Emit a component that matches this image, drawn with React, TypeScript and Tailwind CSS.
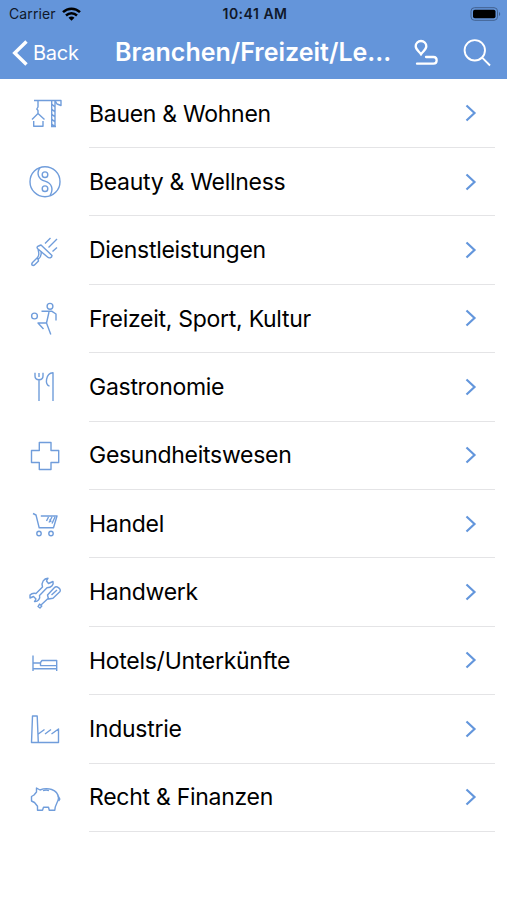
import type { ReactNode } from 'react';

type Category = {
  label: string;
  icon: ReactNode;
};

const categories: Category[] = [
  {
    label: 'Bauen & Wohnen',
    icon: (
      <>
        <path d="M14 16.5H41V21.5L37 20L35 16.5M31.7 16.5V42.5M35 16.5V42.5M31.7 20L35 23M31.7 25L35 28M31.7 30L35 33M31.7 35L35 38M31.7 40L35 42.5M31 42.5H36" />
        <path d="M18 16.5V23L16.8 25L18 26.5V29.5L12 35.5M18 29.5L24.5 35.5M13.7 37V42.3H23V37" />
      </>
    ),
  },
  {
    label: 'Beauty & Wellness',
    icon: (
      <>
        <circle cx="25" cy="29.7" r="15" />
        <path d="M20 15.7C16 21.7 18.5 27.2 25 29.2C32.5 31.5 33.5 37.7 30 43.7" />
        <circle cx="25" cy="22.7" r="2.8" />
        <circle cx="25" cy="36.7" r="2.8" />
      </>
    ),
  },
  {
    label: 'Dienstleistungen',
    icon: (
      <>
        <path d="M18.5 25L21 24L32 34.5C32 37 29 37.5 27.5 36L18 28C16.5 26.5 17 25.5 18.5 25ZM18 28C18.5 31 20 34 17.5 36.5M21 30C21.5 33 21 36 18.5 38M17.5 36.5L12.5 41.5C10.5 44 13 45.5 15 43.5L18.5 40Z" />
        <path d="M25 22.5L30.5 17M28.5 26.5L37 18M32.5 30.5L37 26.5" />
      </>
    ),
  },
  {
    label: 'Freizeit, Sport, Kultur',
    icon: (
      <>
        <circle cx="30" cy="17.3" r="2.9" />
        <circle cx="14.5" cy="27" r="2.9" />
        <path d="M21.5 22.3H32L36 25V31.5M29 23L26.5 34L30.8 45.5M26.5 34H18L23.5 40" />
      </>
    ),
  },
  {
    label: 'Gastronomie',
    icon: (
      <>
        <path d="M15 15.7V19C15 24 23 24 23 19V15.7M19 16V20M19 23V44" />
        <path d="M33 44V15.7C25.5 16 24.5 28.5 29.5 29" />
      </>
    ),
  },
  {
    label: 'Gesundheitswesen',
    icon: (
      <path d="M19.3 16.5H31V24.5H38.7V36.5H31V43.5H19.3V36.5H11.5V24.5H19.3Z" />
    ),
  },
  {
    label: 'Handel',
    icon: (
      <>
        <path d="M13 19.5L16 21L19.2 33.8H33.5L37 22H20.8M26.5 27L28.5 23M29 28.5L32 23M32 29.5L35 23M30 25L31 28" />
        <circle cx="19" cy="39.5" r="2.2" />
        <circle cx="31" cy="39.5" r="2.2" />
      </>
    ),
  },
  {
    label: 'Handwerk',
    icon: (
      <>
        <path d="M10 32C12 30 14 30 16 30.5L22.5 24C21 19 24 15.5 28 15.2L26.5 18L28.5 20.5L33 18.5C34 21.5 31.5 24.5 27 24.7L19.5 32.5C20.5 35.5 18 38.8 14.5 38.5L16 36L13.5 33.5L10 35Z" />
        <path d="M27.5 32L34.5 24.5C36.5 22.5 42 26 39.8 28.8L33 35.3L28.5 36ZM28 35.5L21 42M19.5 41L21.8 43L20 45L18 43.5ZM31.5 32L37 27" />
      </>
    ),
  },
  {
    label: 'Hotels/Unterkünfte',
    icon: (
      <path d="M13 24.5V40M13 37.8H36.7M36.7 40V29.5H22L20.5 31.5V34.6H36.7M13 32H20.5" />
    ),
  },
  {
    label: 'Industrie',
    icon: (
      <path d="M11.5 43.5L12.5 17H17.2L18.3 43.5ZM18.3 35L24.5 30.5M25 35L31 30.5M31.5 35L38.5 30V43.5H18.3" />
    ),
  },
  {
    label: 'Recht & Finanzen',
    icon: (
      <>
        <path d="M16.5 20L20 22C27 19 38 21 38.5 30C38.5 34 35 36 34.8 42.3H29.3L28.5 39.3H23.5L22.5 42.3H17.5V38.3L14.5 34.5L11.5 33V28.5L14 27L16.5 24Z" />
        <path d="M23 22.7C25 21.7 27 21.7 29 22.5M38.2 28L39.8 31L38.5 33" />
      </>
    ),
  },
];

function StatusBar() {
  return (
    <div className="grid h-[27px] grid-cols-3 items-center pr-[6px] pl-[9px] text-[14px] text-[#10182a]">
      <div className="flex items-center gap-[6px]">
        <span className="tracking-[0.1px]">Carrier</span>
        <svg className="h-[14px] w-[19px]" viewBox="0 0 19 14" fill="none" stroke="#000" strokeWidth="2.5">
          <path d="M1 5.2C5.8 .6 13.2 .6 18 5.2M4 8.5C7.2 5.5 11.8 5.5 15 8.5" />
          <path d="M6.5 10.8C8.2 9.2 10.8 9.2 12.5 10.8L9.5 13.8Z" fill="#000" stroke="none" />
        </svg>
      </div>
      <span className="text-center font-semibold tracking-[0.5px] whitespace-nowrap">10:41 AM</span>
      <svg className="h-[14px] w-[31px] justify-self-end" viewBox="0 0 31 14">
        <rect x="1" y=".7" width="26.5" height="12.6" rx="3.5" fill="none" stroke="#42618f" />
        <rect x="3" y="2.7" width="22.5" height="8.6" rx="1.8" fill="#000" />
        <path d="M29 5C30.6 5.6 30.6 8.4 29 9Z" fill="#42618f" />
      </svg>
    </div>
  );
}

function NavBar() {
  return (
    <div className="flex h-[51px] items-center pl-[12px] text-white">
      <button className="flex w-[103px] items-center gap-[5px]">
        <svg className="h-[26px] w-[16px]" viewBox="0 0 16 26" fill="none" stroke="currentColor" strokeWidth="3.4">
          <path d="M14.5 1.5L2.7 13L14.5 24.5" />
        </svg>
        <span className="text-[20px] tracking-[-0.25px]">Back</span>
      </button>
      <h1 className="w-[277px] pt-px text-[25px] font-semibold whitespace-nowrap">
        Branchen/Freizeit/Le...
      </h1>
      <svg className="ml-[21px] h-[27px] w-[26px] shrink-0" viewBox="0 0 26 27" fill="none" stroke="currentColor" strokeWidth="2.3">
        <path d="M8 15.3C6 12.5 2.7 10.5 2.7 7.3A5.2 5.2 0 0 1 13.3 7.3C13.3 10.5 10 12.5 8 15.3Z" />
        <path d="M13 18H20.5C24.7 18 24.7 24.7 20.5 24.7H4" strokeLinecap="round" />
      </svg>
      <svg className="ml-[24px] h-[28px] w-[28px] shrink-0" viewBox="0 0 28 28" fill="none" stroke="currentColor" strokeWidth="1.9">
        <circle cx="11.8" cy="11.3" r="10.2" />
        <path d="M19.2 18.7L27 26.5" />
      </svg>
    </div>
  );
}

function CategoryRow({ label, icon }: Category) {
  return (
    <li className="flex h-[68.4px] items-center pr-[12px] pl-[20px]">
      <svg
        className="h-[60px] w-[60px] shrink-0"
        viewBox="0 0 60 60"
        fill="none"
        stroke="#709ddb"
        strokeWidth="1.4"
        strokeLinejoin="round"
      >
        {icon}
      </svg>
      <div className="ml-[9px] flex h-full flex-1 items-center justify-between border-b border-[#e4e4e6] pr-[18px]">
        <span className="pt-px text-[23px] tracking-[-0.28px] whitespace-nowrap">{label}</span>
        <svg className="h-[18px] w-[12px]" viewBox="0 0 12 18" fill="none" stroke="#6396dc" strokeWidth="2.2">
          <path d="M1.5 1.5L9.5 9L1.5 16.5" />
        </svg>
      </div>
    </li>
  );
}

export default function App() {
  return (
    <div className="h-[900px] w-[507px] overflow-hidden bg-white font-['Inter','Liberation_Sans',sans-serif] text-black">
      <header className="h-[79px] bg-[#6495da]">
        <StatusBar />
        <NavBar />
      </header>
      <ul className="pt-[0.6px]">
        {categories.map((category) => (
          <CategoryRow key={category.label} {...category} />
        ))}
      </ul>
    </div>
  );
}
